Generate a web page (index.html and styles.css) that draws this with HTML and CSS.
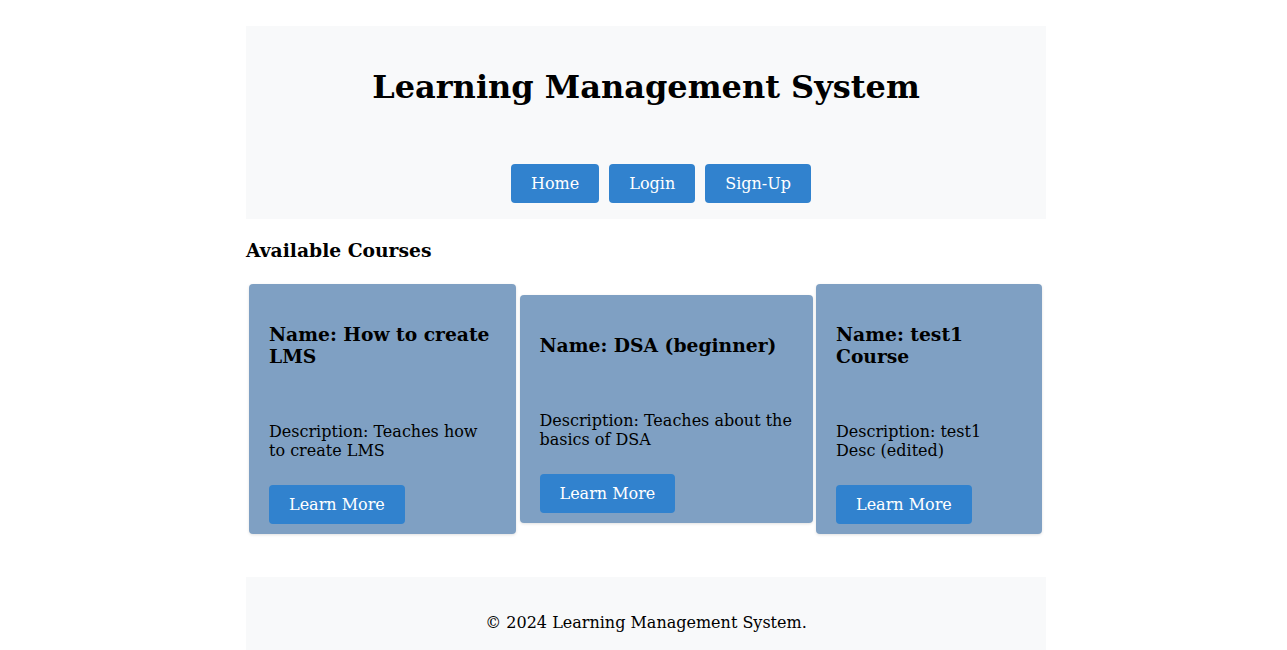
FILE: index.html
```html
<!DOCTYPE html>
<html lang="en">
<head>
<meta charset="utf-8">
<title>Learning Management System</title>
<link rel="stylesheet" href="styles.css">
</head>
<body>
<div class="page">
  <header class="site-header">
    <h1 class="site-title">Learning Management System</h1>
    <nav class="site-nav">
      <a class="btn nav-btn" href="#">Home</a>
      <a class="btn nav-btn" href="#">Login</a>
      <a class="btn nav-btn" href="#">Sign-Up</a>
    </nav>
  </header>
  <main class="courses">
    <h3 class="section-title">Available Courses</h3>
    <div class="course-list">
      <div class="course-card">
        <h3 class="course-name">Name: How to create LMS</h3>
        <p class="course-desc">Description: Teaches how to create LMS</p>
        <a class="btn card-btn" href="#">Learn More</a>
      </div>
      <div class="course-card">
        <h3 class="course-name">Name: DSA (beginner)</h3>
        <p class="course-desc">Description: Teaches about the basics of DSA</p>
        <a class="btn card-btn" href="#">Learn More</a>
      </div>
      <div class="course-card">
        <h3 class="course-name">Name: test1 Course</h3>
        <p class="course-desc">Description: test1 Desc (edited)</p>
        <a class="btn card-btn" href="#">Learn More</a>
      </div>
    </div>
  </main>
  <footer class="site-footer">
    <p class="footer-text">&copy; 2024 Learning Management System.</p>
  </footer>
</div>
</body>
</html>
```
FILE: styles.css
```css
html, body {
  margin: 0;
  padding: 0;
  background: #ffffff;
  font-family: "DejaVu Serif", serif;
  color: #000;
}

body {
  padding-left: 5px;
}

.page {
  width: 800px;
  margin: 0 auto;
  padding-top: 26px;
}

.site-header {
  background: #f8f9fa;
  padding: 21px 0 16px;
  text-align: center;
}

.site-title {
  font-size: 32px;
  font-weight: bold;
  margin: 21.44px 0;
}

.site-nav {
  display: flex;
  justify-content: center;
  margin-top: 57.4px;
  padding-left: 40px;
}

.btn {
  display: inline-block;
  background: #3182ce;
  color: #fff;
  text-decoration: none;
  font-size: 16px;
  padding: 10px 20px;
  border-radius: 4px;
}

.nav-btn {
  margin-right: 10px;
}

.section-title {
  font-size: 18.72px;
  margin: 20.5px 0 18.72px;
}

.course-list {
  display: grid;
  grid-template-columns: 267px 293px 226px;
  column-gap: 3.5px;
  justify-content: start;
  align-items: center;
  padding: 4px 0 0 3px;
}

.course-card {
  display: flex;
  flex-direction: column;
  background: #7fa0c3;
  border-radius: 4px;
  padding: 20px 20px 0;
  box-shadow: 0 1px 3px rgba(0, 0, 0, 0.12);
}

.course-name {
  font-size: 18.72px;
  margin: 18.5px 0 18.94px;
}

.course-desc {
  font-size: 16px;
  margin: 36.5px 0 15.5px;
}

.card-btn {
  align-self: flex-start;
  margin: 10px 0 9.5px;
}

.site-footer {
  background: #f8f9fa;
  margin-top: 43px;
  padding: 20px 0;
  text-align: center;
}

.footer-text {
  font-size: 16px;
  margin: 16px 0;
}
```
